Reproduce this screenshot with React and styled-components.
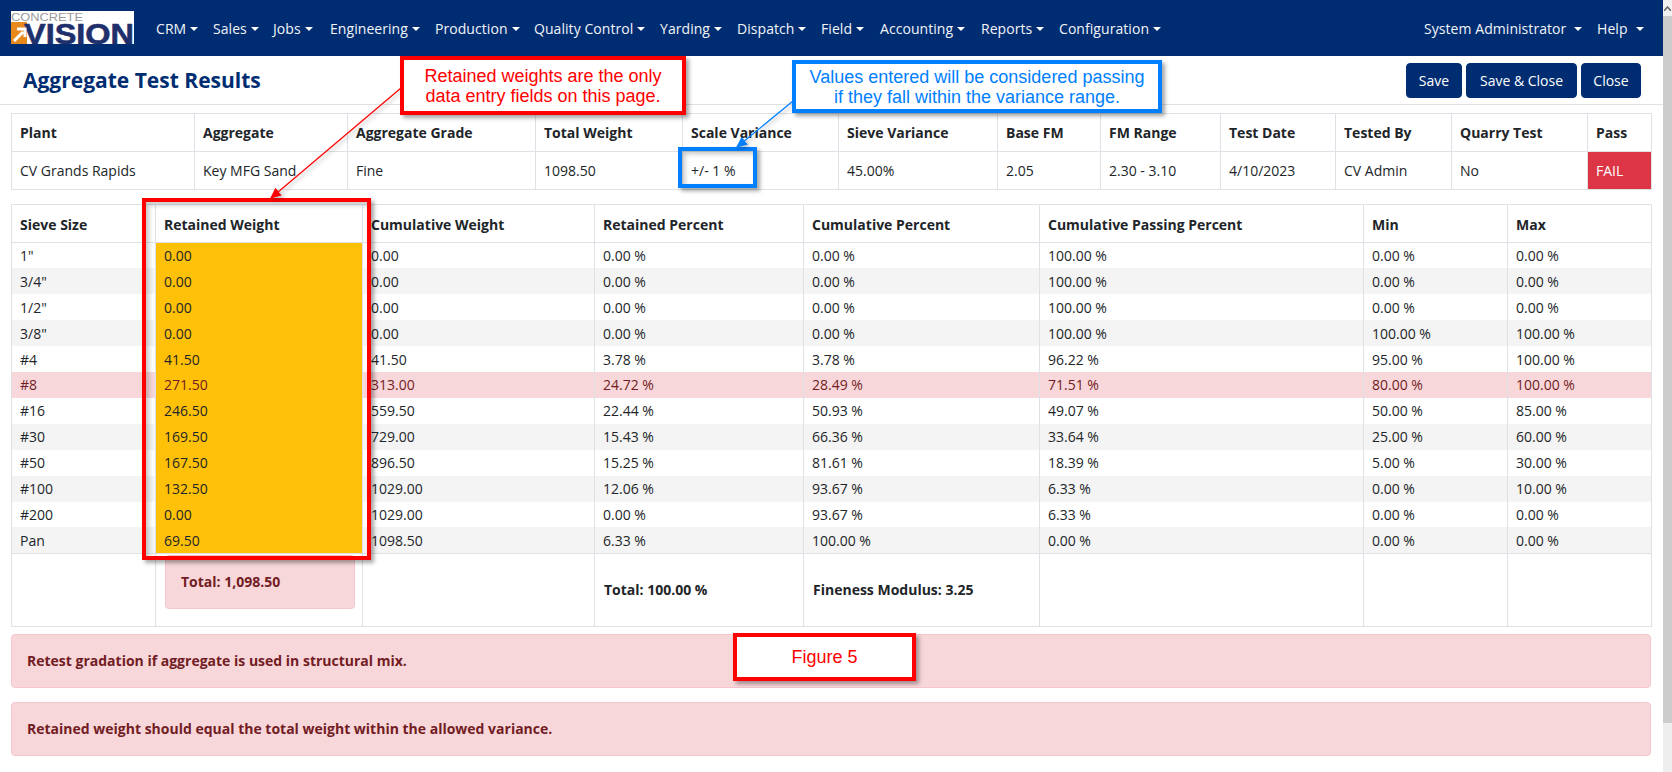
import React from 'react';
import styled, { createGlobalStyle } from 'styled-components';

const GlobalStyle = createGlobalStyle`
  html, body {
    margin: 0;
    padding: 0;
    height: 772px;
    overflow: hidden;
    background: #fff;
  }
  body {
    font-family: "Open Sans", "Noto Sans", "Liberation Sans", sans-serif;
    font-size: 14px;
    color: #212529;
  }
  * { box-sizing: border-box; }
`;

const Page = styled.div`
  position: relative;
  display: flex;
  width: 1672px;
  height: 772px;
  overflow: hidden;
`;

const Main = styled.div`
  flex: 1;
  min-width: 0;
`;

const ScrollBar = styled.div`
  width: 9px;
  display: flex;
  flex-direction: column;
  background: #eee;
`;

const ScrollButton = styled.div`
  height: 16px;
  background: #f0f0f0;
  display: flex;
  align-items: center;
  justify-content: center;
  color: #666;
`;

const ScrollThumb = styled.div`
  height: 707px;
  background: #ccc;
`;

const Navbar = styled.nav`
  height: 56px;
  background: #002d72;
  display: flex;
  align-items: center;
  padding-left: 11px;
  color: #fff;
`;

const LogoBox = styled.div`
  width: 123px;
  height: 33px;
  margin-right: 22px;
  margin-top: -1px;
`;

const NavList = styled.div`
  display: flex;
  align-items: center;
  margin-top: 2px;
`;

const NavItem = styled.div`
  width: ${p => p.$w}px;
  display: flex;
  align-items: center;
  font-size: 14px;
  letter-spacing: 0.06px;
  line-height: 20px;
  white-space: nowrap;
  color: #f2f4f8;
  &::after {
    content: "";
    margin-left: ${p => p.$gap || 4}px;
    border-top: 4px solid #fff;
    border-left: 4px solid transparent;
    border-right: 4px solid transparent;
  }
`;

const UserMenu = styled.div`
  margin-left: auto;
  margin-top: 2px;
  display: flex;
  align-items: center;
`;

const HeaderBar = styled.div`
  height: 49px;
  display: flex;
  align-items: center;
  justify-content: space-between;
  padding: 0 22px 0 23px;
  border-bottom: 1px solid #dee2e6;
`;

const Title = styled.h1`
  margin: 0;
  font-size: 21px;
  font-weight: 700;
  color: #002d72;
`;

const ButtonRow = styled.div`
  display: flex;
  gap: 4px;
`;

const ActionButton = styled.button`
  height: 35px;
  width: ${p => p.$w}px;
  padding: 0;
  background: #002d72;
  border: 1px solid #002d72;
  border-radius: 4px;
  color: #fff;
  font-family: inherit;
  font-size: 14px;
`;

const Content = styled.div`
  padding: 8px 12px 0 11px;
`;

const Grid = styled.table`
  width: 1640px;
  table-layout: fixed;
  border-collapse: collapse;
  line-height: 20px;
  margin-bottom: ${p => p.$mb || 0}px;
  th, td {
    border: 1px solid #dee2e6;
    text-align: left;
    white-space: nowrap;
    overflow: hidden;
  }
  th {
    height: 38px;
    padding: ${p => p.$headPad || 0}px 8px 0;
    font-weight: 700;
    color: #212529;
  }
`;

const InfoCell = styled.td`
  height: 38px;
  padding: 0 8px;
  background: ${p => (p.$fail ? '#dc3545' : 'transparent')};
  color: ${p => (p.$fail ? '#fff' : 'inherit')};
`;

const SieveRow = styled.tr`
  background: ${p => (p.$fail ? '#f8d7da' : p.$striped ? '#f4f4f4' : '#fff')};
  color: ${p => (p.$fail ? '#721c24' : '#212529')};
`;

const SieveCell = styled.td`
  height: 25.92px;
  padding: 1px 8px 0;
  background: ${p => (p.$entry ? '#ffc107' : 'transparent')};
  && {
    border-top: 0;
    border-bottom: 0;
  }
`;

const TotalCell = styled.td`
  height: 73px;
  padding: 1px 9px 0;
  font-weight: 700;
  vertical-align: ${p => (p.$top ? 'top' : 'middle')};
`;

const TotalAlert = styled.div`
  height: 54px;
  width: 190px;
  padding: 0 15px;
  display: flex;
  align-items: center;
  background: #f8d7da;
  border: 1px solid #f5c6cb;
  border-radius: 4px;
  color: #721c24;
`;

const Alert = styled.div`
  height: 54px;
  margin-bottom: 14px;
  padding: 0 15px;
  display: flex;
  align-items: center;
  background: #f8d7da;
  border: 1px solid #f5c6cb;
  border-radius: 4px;
  color: #721c24;
  font-weight: 700;
`;

const Callout = styled.div`
  position: absolute;
  left: ${p => p.$x}px;
  top: ${p => p.$y}px;
  width: ${p => p.$w}px;
  height: ${p => p.$h}px;
  display: flex;
  align-items: center;
  justify-content: center;
  text-align: center;
  font-family: "Liberation Sans", Arial, sans-serif;
  font-size: 18px;
  line-height: 20px;
  color: ${p => p.$color};
  background: ${p => (p.$hollow ? 'transparent' : '#fff')};
  border: 4px solid ${p => p.$color};
  box-shadow: 3px 3px 4px rgba(0, 0, 0, 0.35)${p => (p.$hollow ? ', inset 3px 3px 5px rgba(0, 0, 0, 0.22)' : '')};
`;

const Arrows = styled.svg`
  position: absolute;
  left: 0;
  top: 0;
  width: 1672px;
  height: 772px;
  pointer-events: none;
  filter: drop-shadow(2px 2px 2px rgba(0, 0, 0, 0.3));
`;

const navItems = [
  ['CRM', 57], ['Sales', 60], ['Jobs', 57], ['Engineering', 105], ['Production', 99],
  ['Quality Control', 126], ['Yarding', 77], ['Dispatch', 84], ['Field', 59],
  ['Accounting', 101], ['Reports', 78], ['Configuration', 110],
];

const infoCols = [183, 153, 188, 147, 156, 159, 103, 120, 115, 116, 136, 64];
const infoHead = ['Plant', 'Aggregate', 'Aggregate Grade', 'Total Weight', 'Scale Variance', 'Sieve Variance', 'Base FM', 'FM Range', 'Test Date', 'Tested By', 'Quarry Test', 'Pass'];
const infoRow = ['CV Grands Rapids', 'Key MFG Sand', 'Fine', '1098.50', '+/- 1 %', '45.00%', '2.05', '2.30 - 3.10', '4/10/2023', 'CV Admin', 'No'];

const sieveCols = [144, 207, 232, 209, 236, 324, 144, 144];
const sieveHead = ['Sieve Size', 'Retained Weight', 'Cumulative Weight', 'Retained Percent', 'Cumulative Percent', 'Cumulative Passing Percent', 'Min', 'Max'];
const sieves = [
  ['1"', '0.00', '0.00', '0.00 %', '0.00 %', '100.00 %', '0.00 %', '0.00 %'],
  ['3/4"', '0.00', '0.00', '0.00 %', '0.00 %', '100.00 %', '0.00 %', '0.00 %'],
  ['1/2"', '0.00', '0.00', '0.00 %', '0.00 %', '100.00 %', '0.00 %', '0.00 %'],
  ['3/8"', '0.00', '0.00', '0.00 %', '0.00 %', '100.00 %', '100.00 %', '100.00 %'],
  ['#4', '41.50', '41.50', '3.78 %', '3.78 %', '96.22 %', '95.00 %', '100.00 %'],
  ['#8', '271.50', '313.00', '24.72 %', '28.49 %', '71.51 %', '80.00 %', '100.00 %'],
  ['#16', '246.50', '559.50', '22.44 %', '50.93 %', '49.07 %', '50.00 %', '85.00 %'],
  ['#30', '169.50', '729.00', '15.43 %', '66.36 %', '33.64 %', '25.00 %', '60.00 %'],
  ['#50', '167.50', '896.50', '15.25 %', '81.61 %', '18.39 %', '5.00 %', '30.00 %'],
  ['#100', '132.50', '1029.00', '12.06 %', '93.67 %', '6.33 %', '0.00 %', '10.00 %'],
  ['#200', '0.00', '1029.00', '0.00 %', '93.67 %', '6.33 %', '0.00 %', '0.00 %'],
  ['Pan', '69.50', '1098.50', '6.33 %', '100.00 %', '0.00 %', '0.00 %', '0.00 %'],
];

function Logo() {
  return (
    <svg width="123" height="33" viewBox="0 0 123 33" overflow="visible">
      <rect width="123" height="33" fill="#fff" />
      <rect x="0" y="11" width="16" height="22" fill="#e8891c" />
      <text x="0" y="9.5" fontFamily="Liberation Sans, sans-serif" fontSize="11.5" fill="#9a9a9a" textLength="72" lengthAdjust="spacingAndGlyphs">CONCRETE</text>
      <text x="13" y="32.5" fontFamily="Liberation Sans, sans-serif" fontSize="29" fontWeight="700" fill="#1f2f6b" stroke="#1f2f6b" strokeWidth="0.6" textLength="110" lengthAdjust="spacingAndGlyphs">VISION</text>
      <path d="M3 30 L12 21 M6 18 H14 V26" stroke="#fff" strokeWidth="3" fill="none" />
    </svg>
  );
}

export default function App() {
  return (
    <Page>
      <GlobalStyle />
      <Main>
        <Navbar>
          <LogoBox><Logo /></LogoBox>
          <NavList>
            {navItems.map(([label, w]) => <NavItem key={label} $w={w}>{label}</NavItem>)}
          </NavList>
          <UserMenu>
            <NavItem $w={173} $gap={8}>System Administrator</NavItem>
            <NavItem $w={66} $gap={8}>Help</NavItem>
          </UserMenu>
        </Navbar>
        <HeaderBar>
          <Title>Aggregate Test Results</Title>
          <ButtonRow>
            <ActionButton $w={56}>Save</ActionButton>
            <ActionButton $w={111}>Save &amp; Close</ActionButton>
            <ActionButton $w={60}>Close</ActionButton>
          </ButtonRow>
        </HeaderBar>
        <Content>
          <Grid $mb={14}>
            <colgroup>{infoCols.map((w, i) => <col key={i} style={{ width: w }} />)}</colgroup>
            <thead>
              <tr>{infoHead.map(h => <th key={h}>{h}</th>)}</tr>
            </thead>
            <tbody>
              <tr>
                {infoRow.map(v => <InfoCell key={v}>{v}</InfoCell>)}
                <InfoCell $fail>FAIL</InfoCell>
              </tr>
            </tbody>
          </Grid>
          <Grid $mb={7} $headPad={2}>
            <colgroup>{sieveCols.map((w, i) => <col key={i} style={{ width: w }} />)}</colgroup>
            <thead>
              <tr>{sieveHead.map(h => <th key={h}>{h}</th>)}</tr>
            </thead>
            <tbody>
              {sieves.map((row, i) => (
                <SieveRow key={row[0]} $striped={i % 2 === 1} $fail={row[0] === '#8'}>
                  {row.map((v, c) => <SieveCell key={c} $entry={c === 1}>{v}</SieveCell>)}
                </SieveRow>
              ))}
              <tr>
                <TotalCell />
                <TotalCell $top><TotalAlert>Total: 1,098.50</TotalAlert></TotalCell>
                <TotalCell />
                <TotalCell>Total: 100.00 %</TotalCell>
                <TotalCell>Fineness Modulus: 3.25</TotalCell>
                <TotalCell />
                <TotalCell />
                <TotalCell />
              </tr>
            </tbody>
          </Grid>
          <Alert>Retest gradation if aggregate is used in structural mix.</Alert>
          <Alert>Retained weight should equal the total weight within the allowed variance.</Alert>
        </Content>
      </Main>
      <ScrollBar>
        <ScrollButton>
          <svg width="7" height="5" viewBox="0 0 7 5"><path d="M0 5 L3.5 1 L7 5" stroke="#666" strokeWidth="1.5" fill="none" /></svg>
        </ScrollButton>
        <ScrollThumb />
      </ScrollBar>

      <Callout $x={142} $y={198} $w={229} $h={362} $color="#ff0000" $hollow />
      <Callout $x={678} $y={147} $w={79} $h={41} $color="#0080ff" $hollow />
      <Arrows viewBox="0 0 1672 772">
        <defs>
          <marker id="head-red" markerWidth="10" markerHeight="10" refX="8" refY="4" orient="auto">
            <path d="M0 0 L9 4 L0 8 Z" fill="#ff0000" />
          </marker>
          <marker id="head-blue" markerWidth="10" markerHeight="10" refX="8" refY="4" orient="auto">
            <path d="M0 0 L9 4 L0 8 Z" fill="#0080ff" />
          </marker>
        </defs>
        <line x1="401" y1="88" x2="271" y2="198" stroke="#ff0000" strokeWidth="1.25" markerEnd="url(#head-red)" />
        <line x1="793" y1="101" x2="737" y2="147" stroke="#0080ff" strokeWidth="1.25" markerEnd="url(#head-blue)" />
      </Arrows>
      <Callout $x={400} $y={56} $w={286} $h={59} $color="#ff0000">
        <span>Retained weights are the only<br />data entry fields on this page.</span>
      </Callout>
      <Callout $x={792} $y={60} $w={370} $h={53} $color="#0080ff">
        <span>Values entered will be considered passing<br />if they fall within the variance range.</span>
      </Callout>
      <Callout $x={733} $y={633} $w={183} $h={48} $color="#ff0000">Figure 5</Callout>
    </Page>
  );
}
